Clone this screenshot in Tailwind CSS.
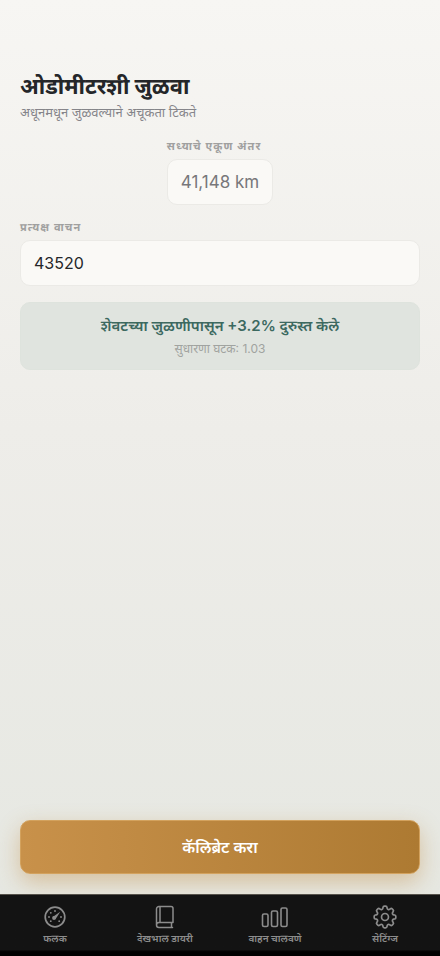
<!DOCTYPE html>
<html lang="mr">
<head>
<meta charset="utf-8">
<meta name="viewport" content="width=device-width, initial-scale=1">
<title>ओडोमीटरशी जुळवा</title>
<script src="https://cdn.jsdelivr.net/npm/@tailwindcss/browser@4"></script>
</head>
<body class="flex min-h-screen flex-col bg-linear-to-b from-[#f7f6f3] via-[#eeede9] via-45% to-[#e5e7e1] font-[Inter,'Noto_Sans_Devanagari','Noto_Sans',sans-serif] text-[#242629]">
<main class="flex flex-1 flex-col px-5 pt-[72px] pb-5">
  <h1 class="text-[22px] leading-7 font-bold">ओडोमीटरशी जुळवा</h1>
  <p class="mt-1 text-[13px] leading-4 text-[#85858a]">अधूनमधून जुळवल्याने अचूकता टिकते</p>
  <section class="mt-5 flex flex-col items-start self-center">
    <h2 class="text-[11px] leading-3 font-bold tracking-widest text-[#a0a09f]">सध्याचे एकूण अंतर</h2>
    <output class="mt-[7px] rounded-[10px] border border-[#ebeae6] bg-[#faf9f6] px-[13px] py-2.5 text-[17px] leading-6 text-[#77777a]">41,148 km</output>
  </section>
  <label for="reading" class="mt-4 text-[11px] leading-3 font-bold tracking-widest text-[#a0a09f]">प्रत्यक्ष वाचन</label>
  <input id="reading" type="text" inputmode="numeric" value="43520" class="mt-[7px] w-full rounded-[10px] border border-[#ebeae6] bg-[#faf9f6] px-[13px] py-2.5 text-base leading-6">
  <section class="mt-4 rounded-[10px] border border-[#dee3dd] bg-[#e0e4df] px-4 py-3 text-center">
    <p class="text-[15px] leading-[22px] font-semibold text-[#3c695f]">शेवटच्या जुळणीपासून +3.2% दुरुस्त केले</p>
    <p class="mt-1 text-xs leading-4 text-[#a0a3a0]">सुधारणा घटक: 1.03</p>
  </section>
  <button type="button" class="mt-auto rounded-[10px] border border-[#d3a25e] bg-linear-to-r from-[#c8914a] to-[#ad7a32] py-4 text-base leading-5 font-semibold text-white shadow-[0_8px_22px_rgba(190,135,60,0.42)]">कॅलिब्रेट करा</button>
</main>
<nav class="relative border-t border-[#56524b] bg-linear-to-b from-[#131313] from-90% to-black to-95% pt-2.5 pb-2.5 text-[10px] leading-4 font-semibold text-[#8c8c8c]">
  <ul class="grid grid-cols-4">
    <li><a href="#dashboard" class="flex flex-col items-center gap-px">
      <svg class="size-6" viewBox="0 0 24 24" fill="none" stroke="currentColor" stroke-width="1.7"><circle cx="12" cy="12" r="9.8"/><circle cx="11" cy="13" r="1.9" fill="currentColor" stroke="none"/><path d="M9.700 12 17.200 6.800 12.500 14.300Z" fill="currentColor" stroke="none"/><g fill="currentColor" stroke="none"><circle cx="12" cy="6" r=".9"/><circle cx="7.8" cy="7.8" r=".9"/><circle cx="6" cy="12" r=".9"/><circle cx="7.8" cy="16.2" r=".9"/><circle cx="18" cy="12" r=".9"/><circle cx="16.2" cy="16.2" r=".9"/></g></svg>
      <span>फलक</span></a></li>
    <li><a href="#diary" class="flex flex-col items-center gap-px">
      <svg class="size-6" viewBox="0 0 24 24" fill="none" stroke="currentColor" stroke-width="1.5" stroke-linecap="round" stroke-linejoin="round"><path d="M20 17.500V3.500a2 2 0 0 0-2-2H6a2.500 2.500 0 0 0-2.500 2.500V20A2.500 2.500 0 0 0 6 22.500H19.500M7 1.500V17.500M20 17.500H6A2.500 2.500 0 0 0 3.500 20M18.500 17.500V22.500"/></svg>
      <span>देखभाल डायरी</span></a></li>
    <li><a href="#driving" class="flex flex-col items-center gap-px">
      <svg class="h-6 w-7" viewBox="0 0 28 24" fill="none" stroke="currentColor" stroke-width="1.6"><rect x="1.500" y="9" width="5.500" height="12.500" rx="1.500"/><rect x="10.500" y="6" width="6" height="15.500" rx="1.500"/><rect x="20" y="3" width="6" height="18.500" rx="1.500"/></svg>
      <span>वाहन चालवणे</span></a></li>
    <li><a href="#settings" class="flex flex-col items-center gap-px">
      <svg class="size-6" viewBox="2 2 20 20" fill="none" stroke="currentColor" stroke-width="1.4" stroke-linejoin="round"><path d="M10.343 3.94c.09-.542.56-.94 1.11-.94h1.093c.55 0 1.02.398 1.11.94l.149.894c.07.424.384.764.78.93.398.164.855.142 1.205-.108l.737-.527a1.125 1.125 0 0 1 1.45.12l.773.774c.39.389.44 1.002.12 1.45l-.527.737c-.25.35-.272.806-.107 1.204.165.397.505.71.93.78l.893.15c.543.09.94.559.94 1.109v1.094c0 .55-.397 1.02-.94 1.11l-.894.149c-.424.07-.764.383-.929.78-.165.398-.143.854.107 1.204l.527.738c.32.447.269 1.06-.12 1.45l-.774.773a1.125 1.125 0 0 1-1.449.12l-.738-.527c-.35-.25-.806-.272-1.203-.107-.398.165-.71.505-.781.929l-.149.894c-.09.542-.56.94-1.11.94h-1.094c-.55 0-1.019-.398-1.11-.94l-.148-.894c-.071-.424-.384-.764-.781-.93-.398-.164-.854-.142-1.204.108l-.738.527c-.447.32-1.06.269-1.45-.12l-.773-.774a1.125 1.125 0 0 1-.12-1.45l.527-.737c.25-.35.272-.806.108-1.204-.165-.397-.506-.71-.93-.78l-.894-.15c-.542-.09-.94-.56-.94-1.109v-1.094c0-.55.398-1.02.94-1.11l.894-.149c.424-.07.765-.383.93-.78.165-.398.143-.854-.108-1.204l-.526-.738a1.125 1.125 0 0 1 .12-1.45l.773-.773a1.125 1.125 0 0 1 1.45-.12l.737.527c.35.25.807.272 1.204.107.397-.165.71-.505.78-.929l.15-.894Z"/><circle cx="12" cy="12" r="2.900"/></svg>
      <span>सेटिंग्ज</span></a></li>
  </ul>
</nav>
</body>
</html>
